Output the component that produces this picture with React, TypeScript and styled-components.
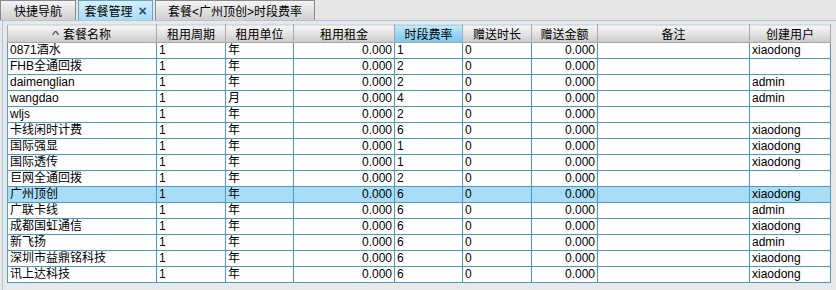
import { createGlobalStyle } from 'styled-components'
import styled from 'styled-components'

const GlobalStyle = createGlobalStyle`
  html, body {
    margin: 0;
    padding: 0;
    background: #e8e8e8;
  }
  body {
    font-family: 'Liberation Sans', 'Noto Sans CJK SC', sans-serif;
    font-size: 12px;
    color: #000;
  }
`

interface Column {
  title: string
  width: number
  align?: 'left' | 'right'
}

const columns: Column[] = [
  { title: '套餐名称', width: 149 },
  { title: '租用周期', width: 69 },
  { title: '租用单位', width: 68 },
  { title: '租用租金', width: 101, align: 'right' },
  { title: '时段费率', width: 68 },
  { title: '赠送时长', width: 69 },
  { title: '赠送金额', width: 66, align: 'right' },
  { title: '备注', width: 152 },
  { title: '创建用户', width: 81 },
]

const rows: string[][] = [
  ['0871酒水', '1', '年', '0.000', '1', '0', '0.000', '', 'xiaodong'],
  ['FHB全通回拨', '1', '年', '0.000', '2', '0', '0.000', '', ''],
  ['daimenglian', '1', '年', '0.000', '2', '0', '0.000', '', 'admin'],
  ['wangdao', '1', '月', '0.000', '4', '0', '0.000', '', 'admin'],
  ['wljs', '1', '年', '0.000', '2', '0', '0.000', '', ''],
  ['卡线闲时计费', '1', '年', '0.000', '6', '0', '0.000', '', 'xiaodong'],
  ['国际强显', '1', '年', '0.000', '1', '0', '0.000', '', 'xiaodong'],
  ['国际透传', '1', '年', '0.000', '1', '0', '0.000', '', 'xiaodong'],
  ['巨网全通回拨', '1', '年', '0.000', '2', '0', '0.000', '', ''],
  ['广州顶创', '1', '年', '0.000', '6', '0', '0.000', '', 'xiaodong'],
  ['广联卡线', '1', '年', '0.000', '6', '0', '0.000', '', 'admin'],
  ['成都国虹通信', '1', '年', '0.000', '6', '0', '0.000', '', 'xiaodong'],
  ['新飞扬', '1', '年', '0.000', '6', '0', '0.000', '', 'admin'],
  ['深圳市益鼎铭科技', '1', '年', '0.000', '6', '0', '0.000', '', 'xiaodong'],
  ['讯上达科技', '1', '年', '0.000', '6', '0', '0.000', '', 'xiaodong'],
]

const tabs = [
  { label: '快捷导航', width: 76 },
  { label: '套餐管理', width: 75, active: true, closable: true },
  { label: '套餐<广州顶创>时段费率', width: 160 },
]

const SELECTED_ROW = 9
const SELECTED_COL = 4

export default function App() {
  return (
    <>
      <GlobalStyle />
      <Page>
        <TabBar>
          {tabs.map((tab) => (
            <Tab key={tab.label} $active={!!tab.active} style={{ width: tab.width }}>
              {tab.label}
              {tab.closable && <Close>×</Close>}
            </Tab>
          ))}
        </TabBar>
        <Panel>
          <Grid>
            <colgroup>
              {columns.map((c) => (
                <col key={c.title} style={{ width: c.width }} />
              ))}
            </colgroup>
            <thead>
              <tr>
                {columns.map((c, i) => (
                  <HeadCell key={c.title} $active={i === SELECTED_COL}>
                    {i === 0 && <SortMark>^</SortMark>}
                    {c.title}
                  </HeadCell>
                ))}
              </tr>
            </thead>
            <tbody>
              {rows.map((row, r) => (
                <Row key={row[0]} $selected={r === SELECTED_ROW}>
                  {row.map((value, i) => (
                    <Cell key={i} $align={columns[i].align ?? 'left'}>
                      {value}
                    </Cell>
                  ))}
                </Row>
              ))}
            </tbody>
          </Grid>
        </Panel>
      </Page>
    </>
  )
}

const Page = styled.div`
  width: 836px;
  height: 290px;
  overflow: hidden;
  background: #e8e8e8;
`

const TabBar = styled.div`
  display: flex;
  gap: 2px;
  height: 21px;
  border-bottom: 1px solid #9fcbe6;
  box-sizing: border-box;
  background: #e6e6e6;
`

const Tab = styled.div<{ $active: boolean }>`
  box-sizing: border-box;
  height: 20px;
  display: flex;
  align-items: center;
  justify-content: center;
  gap: 6px;
  border: 1px solid ${(p) => (p.$active ? '#6a9fc2' : '#8a8a8a')};
  border-bottom: none;
  background: ${(p) =>
    p.$active
      ? 'linear-gradient(#d6effb, #a9dcf4)'
      : 'linear-gradient(#f4f4f4, #cfcfcf)'};
  white-space: nowrap;
`

const Close = styled.span`
  color: #1f4f86;
  font-weight: bold;
  font-size: 14px;
`

const Panel = styled.div`
  margin-left: 2px;
  padding: 3px 0 0 4px;
  border-left: 1px solid #9fcbe6;
  height: 268px;
`

const Grid = styled.table`
  border-collapse: collapse;
  table-layout: fixed;
  width: 823px;
`

const HeadCell = styled.th<{ $active: boolean }>`
  height: 17px;
  padding: 0;
  font-weight: normal;
  text-align: center;
  white-space: nowrap;
  border: 1px solid #a9a9a9;
  border-top-color: #d9d9d9;
  background: ${(p) =>
    p.$active
      ? 'linear-gradient(#c6e9fa, #8fd2f2 60%, #7cc8ec)'
      : 'linear-gradient(#f6f6f6, #dedede 60%, #c9c9c9)'};
`

const SortMark = styled.span`
  display: inline-block;
  margin-right: 5px;
  font-size: 11px;
  transform: scaleX(1.4);
  color: #333;
`

const Row = styled.tr<{ $selected: boolean }>`
  background: ${(p) => (p.$selected ? '#a8ddf5' : '#fff')};
`

const Cell = styled.td<{ $align: 'left' | 'right' }>`
  height: 15px;
  padding: 0 2px;
  line-height: 15px;
  text-align: ${(p) => p.$align};
  white-space: nowrap;
  overflow: hidden;
  border: 1px solid #4a9acb;
`
